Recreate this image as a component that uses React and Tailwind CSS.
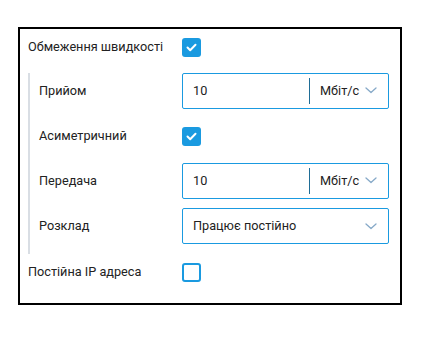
import React from 'react';

const font = { fontFamily: 'Roboto, "Noto Sans", sans-serif' };

function Check({ checked }) {
  if (checked) {
    return (
      <div className="flex h-[19px] w-[19px] items-center justify-center rounded-[3px] bg-[#1a9ae0]">
        <svg width="11" height="9" viewBox="0 0 11 9" fill="none">
          <path d="M1.5 4.5L4.2 7.2L9.5 1.8" stroke="white" strokeWidth="2" strokeLinecap="round" strokeLinejoin="round" />
        </svg>
      </div>
    );
  }
  return <div className="h-[19px] w-[19px] rounded-[3px] border-2 border-[#1a9ae0] bg-white" />;
}

function Chevron() {
  return (
    <svg width="12" height="7" viewBox="0 0 12 7" fill="none">
      <path d="M1 1L6 5.5L11 1" stroke="#86a9c8" strokeWidth="1.3" strokeLinecap="round" strokeLinejoin="round" />
    </svg>
  );
}

function SpeedInput({ value }) {
  return (
    <div className="flex h-9 w-[207px] items-center rounded-[2px] border border-[#1a9ae0] bg-white">
      <div className="flex-1 pl-[10px] text-[12.7px] text-[#222]">{value}</div>
      <div className="h-[26px] w-px bg-[#1f6d96]" />
      <div className="flex w-[78px] items-center justify-between pl-[10px] pr-[11px] text-[12.7px] text-[#222]">
        <span>Мбіт/с</span>
        <Chevron />
      </div>
    </div>
  );
}

function Row({ label, labelWidth, children }) {
  return (
    <div className="flex h-9 items-center">
      <div className={`${labelWidth} text-[12.7px] text-[#222]`}>{label}</div>
      {children}
    </div>
  );
}

export default function App() {
  return (
    <div className="bg-white pl-[18px] pt-[27px]" style={font}>
      <div className="w-[384px] border-2 border-black pl-[8px] pr-[11px] pb-[13px]">
        <Row label="Обмеження швидкості" labelWidth="w-[154px]">
          <Check checked />
        </Row>

        <div className="mt-2 flex flex-col gap-[9px] border-l-2 border-[#d9dee4] pb-[10px] pl-[9px]">
          <Row label="Прийом" labelWidth="w-[143px]">
            <SpeedInput value="10" />
          </Row>
          <Row label="Асиметричний" labelWidth="w-[143px]">
            <Check checked />
          </Row>
          <Row label="Передача" labelWidth="w-[143px]">
            <SpeedInput value="10" />
          </Row>
          <Row label="Розклад" labelWidth="w-[143px]">
            <div className="flex h-9 w-[207px] items-center justify-between rounded-[2px] border border-[#1a9ae0] bg-white pl-[10px] pr-[11px] text-[12.7px] text-[#222]">
              <span>Працює постійно</span>
              <Chevron />
            </div>
          </Row>
        </div>

        <Row label="Постійна IP адреса" labelWidth="w-[154px]">
          <Check />
        </Row>
      </div>
    </div>
  );
}
